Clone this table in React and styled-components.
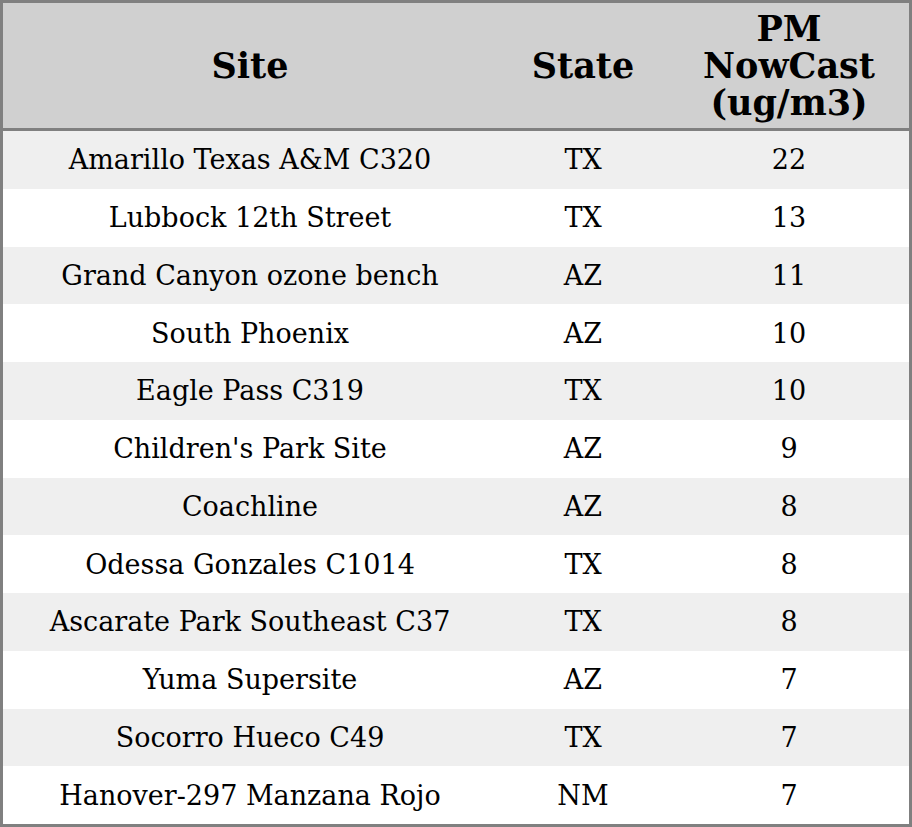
import React from 'react'
import styled, { createGlobalStyle } from 'styled-components'

const GlobalStyle = createGlobalStyle`
  html, body {
    margin: 0;
    padding: 0;
    background: #ffffff;
  }
  body {
    font-family: "DejaVu Serif", "Liberation Serif", serif;
    color: #000;
  }
`

const Table = styled.div`
  width: 912px;
  height: 827px;
  box-sizing: border-box;
  border: 3px solid #808080;
  display: flex;
  flex-direction: column;
`

const Grid = styled.div`
  display: grid;
  grid-template-columns: 494px 172px 1fr;
`

const HeadRow = styled(Grid)`
  background: #d0d0d0;
  border-bottom: 3px solid #808080;
  height: 125px;
`

const HeadCell = styled.div`
  display: flex;
  align-items: center;
  justify-content: center;
  text-align: center;
  font-weight: bold;
  font-size: 35px;
  line-height: 37px;
`

const Body = styled.div`
  flex: 1;
  display: grid;
  grid-template-rows: repeat(12, 1fr);
`

const Row = styled(Grid)`
  background: ${p => (p.$striped ? '#efefef' : '#ffffff')};
`

const Cell = styled.div`
  display: flex;
  align-items: center;
  justify-content: center;
  font-size: 27px;
  white-space: nowrap;
`

const rows = [
  ['Amarillo Texas A&M C320', 'TX', 22],
  ['Lubbock 12th Street', 'TX', 13],
  ['Grand Canyon ozone bench', 'AZ', 11],
  ['South Phoenix', 'AZ', 10],
  ['Eagle Pass C319', 'TX', 10],
  ["Children's Park Site", 'AZ', 9],
  ['Coachline', 'AZ', 8],
  ['Odessa Gonzales C1014', 'TX', 8],
  ['Ascarate Park Southeast C37', 'TX', 8],
  ['Yuma Supersite', 'AZ', 7],
  ['Socorro Hueco C49', 'TX', 7],
  ['Hanover-297 Manzana Rojo', 'NM', 7]
]

export default function App() {
  return (
    <>
      <GlobalStyle />
      <Table>
        <HeadRow>
          <HeadCell>Site</HeadCell>
          <HeadCell>State</HeadCell>
          <HeadCell>PM<br />NowCast<br />(ug/m3)</HeadCell>
        </HeadRow>
        <Body>
          {rows.map(([site, state, pm], i) => (
            <Row key={site} $striped={i % 2 === 0}>
              <Cell>{site}</Cell>
              <Cell>{state}</Cell>
              <Cell>{pm}</Cell>
            </Row>
          ))}
        </Body>
      </Table>
    </>
  )
}
